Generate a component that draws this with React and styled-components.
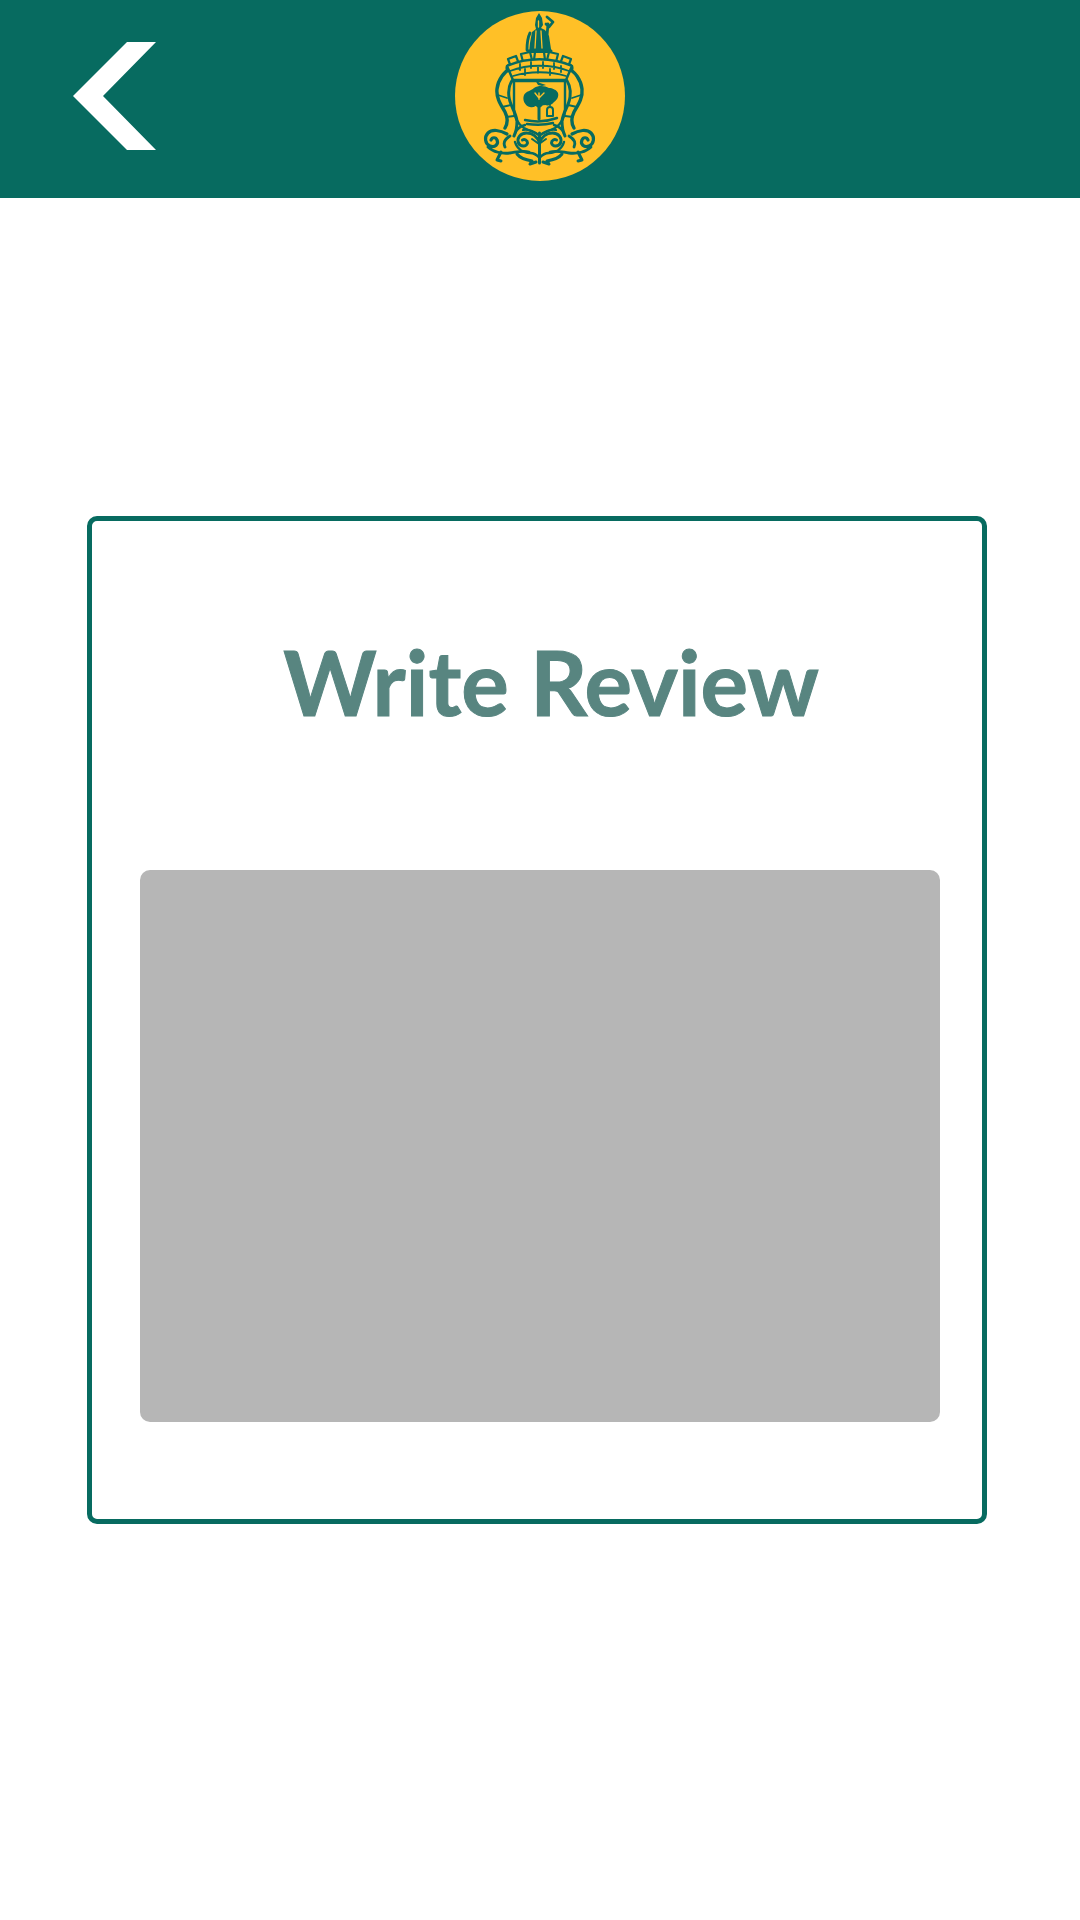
import React from 'react';
import styled, { createGlobalStyle } from 'styled-components';

const GlobalStyle = createGlobalStyle`
  html, body {
    margin: 0;
    padding: 0;
    background: #fff;
  }
`;

const Page = styled.div`
  width: 1080px;
  height: 1920px;
  background: #fff;
  font-family: 'Lato', 'Open Sans', sans-serif;
`;

const Header = styled.header`
  height: 198px;
  background: #076b60;
  display: grid;
  grid-template-columns: 1fr 170px 1fr;
  align-items: center;
`;

const BackButton = styled.button`
  justify-self: start;
  margin: -6px 0 0 73px;
  padding: 0;
  border: 0;
  background: none;
  display: flex;
`;

const LogoCircle = styled.div`
  width: 170px;
  height: 170px;
  border-radius: 50%;
  background: #ffc027;
  display: flex;
  margin-top: -7px;
`;

const Main = styled.main`
  padding: 318px 93px 0 87px;
`;

const Card = styled.section`
  height: 1008px;
  box-sizing: border-box;
  border: 5px solid #076b60;
  border-radius: 10px;
  padding: 0 42px 0 48px;
  display: flex;
  flex-direction: column;
`;

const Title = styled.h1`
  margin: 0;
  height: 349px;
  padding: 111px 0 0 22px;
  box-sizing: border-box;
  text-align: center;
  color: #588580;
  font-size: 89px;
  font-weight: 700;
  line-height: 100px;
  white-space: nowrap;
  -webkit-text-stroke: 1px #588580;
`;

const ReviewBox = styled.textarea`
  height: 552px;
  margin: 0;
  padding: 0;
  border: 0;
  border-radius: 10px;
  background: #b6b6b6;
  resize: none;
  outline: none;
`;

const Chevron = () => (
  <svg width="83" height="108" viewBox="0 0 83 108">
    <polygon fill="#fff" points="54,0 83,0 30,54 83,108 54,108 0,54" />
  </svg>
);

const TEAL = '#076b60';
const GOLD = '#ffc027';

// left half of the crest, mirrored around x=84.5 for the right side
const CrestSide = () => (
  <>
    {/* merlons */}
    <path fill={GOLD} strokeWidth="2.2" d="M53 48l8-3 3 8-8 3zM66 43l9-2 2 8-9 2z" />
    {/* supporter */}
    <path strokeWidth="3.4" d="M57 57c-8 3-14 12-15 21-1 9 4 16 8 23 3 6 3 11 0 16" />
    <path strokeWidth="3" d="M60 66c-5 5-7 13-6 20 1 9 7 15 8 24 0 6-1 11-3 15" />
    <path strokeWidth="1.8" d="M43 84l9 3M47 96l9-2M51 106l8-1" />
    <circle cx="55" cy="57" r="3.5" fill={GOLD} strokeWidth="2.2" />
    {/* side scroll */}
    <path strokeWidth="3.2" d="M52 123c-7-4-15-5-19-1-4 4-3 11 2 13 5 2 9-2 7-6-1-3-5-3-6 0" />
    <path strokeWidth="2.8" d="M55 125c-5 3-7 7-5 11M33 136c5 5 14 7 22 6 7-1 13-3 19-1" />
    <path strokeWidth="3" d="M46 141l-4 8 4 1" />
    {/* centre scroll */}
    <path strokeWidth="3" d="M84.500 132c-2-6-7-10-13-10-6 0-10 5-8 10 2 4 8 4 9 0 0-3-3-4-5-3" />
    <path strokeWidth="2.4" d="M60 131c2 7 8 11 15 11 4 0 7 2 9.500 5M70 114c-4 1-8 4-10 8" />
    <path strokeWidth="3" d="M62 143c3 4 9 6 15 7l-2 3 6-2" />
    <path strokeWidth="2.2" d="M68 119c5-1 12 1 16.500 6" />
  </>
);

const Crest = () => (
  <svg width="170" height="170" viewBox="0 0 170 170" fill="none" stroke={TEAL} strokeLinecap="round" strokeLinejoin="round">
    <CrestSide />
    <g transform="translate(169,0) scale(-1,1)">
      <CrestSide />
    </g>
    {/* bishop */}
    <path fill={TEAL} stroke="none" d="M84 2l3 5 1 7-2 3 4 2 4 6 2 13 1 4H74l1-10 2-11 4-3-1-4 1-7z" />
    <path stroke={GOLD} strokeWidth="1.3" d="M81 20l-1 17M86 20l1 17M83.500 10v6" />
    <path strokeWidth="2.800" d="M75 22c-2 4-3 10-3 17M92 6l6 5-4 5-3-3M93 13l-1 12" />
    <path strokeWidth="3" d="M73 40h23" />
    {/* centre merlon and wall */}
    <path fill={GOLD} strokeWidth="2.200" d="M80 41h9l1 8H79z" />
    <path fill={GOLD} strokeWidth="2.400" d="M52 55c20-9 45-9 65 0l-6 14H58z" />
    <path strokeWidth="1.800" d="M55 60c18-7 41-7 59 0M58 65c16-5 37-5 53 0M65 53v6M76 51v6M88 51v6M99 52v6M106 55v6M70 58v6M83 56v6M95 58v6" />
    {/* shield */}
    <path strokeWidth="2.400" d="M59 70h51v28c0 10-4 15-10 19l-15.500 7-15.500-7c-6-4-10-9-10-19z" />
    {/* tree */}
    <path fill={TEAL} stroke="none" d="M69 84c2-4 7-4 10-7 5-3 11-2 15 0 3 0 8 2 9 5 1 4-1 7-4 9-2 3-6 4-9 3-3 1-5-1-6-2-2 3-6 5-9 4-5-1-8-7-6-12z" />
    <path stroke={GOLD} strokeWidth="1.400" d="M84 90v-8M84 87l-4-5M84 87l5-5" />
    <path strokeWidth="3" d="M84 90v18M84 96l-5-5M84 96l5-5" />
    <path strokeWidth="2.400" d="M70 109c9 2 21 2 32-2M72 113c8 1 18 1 26-1" />
    <path fill={TEAL} stroke="none" d="M80 69l5 3 6 2-4 1-4-1z" />
    <path strokeWidth="1.600" d="M95 88v7" />
    <path fill={GOLD} strokeWidth="2" d="M92 99c0-4 6-4 6 0v6h-6z" />
    {/* centre stem and tails */}
    <path strokeWidth="3" d="M84.500 122v30" />
    <path strokeWidth="2" d="M77 128l7 5 7-5" />
  </svg>
);

export default function App() {
  return (
    <Page>
      <GlobalStyle />
      <Header>
        <BackButton aria-label="Back">
          <Chevron />
        </BackButton>
        <LogoCircle>
          <Crest />
        </LogoCircle>
      </Header>
      <Main>
        <Card>
          <Title>Write Review</Title>
          <ReviewBox />
        </Card>
      </Main>
    </Page>
  );
}
